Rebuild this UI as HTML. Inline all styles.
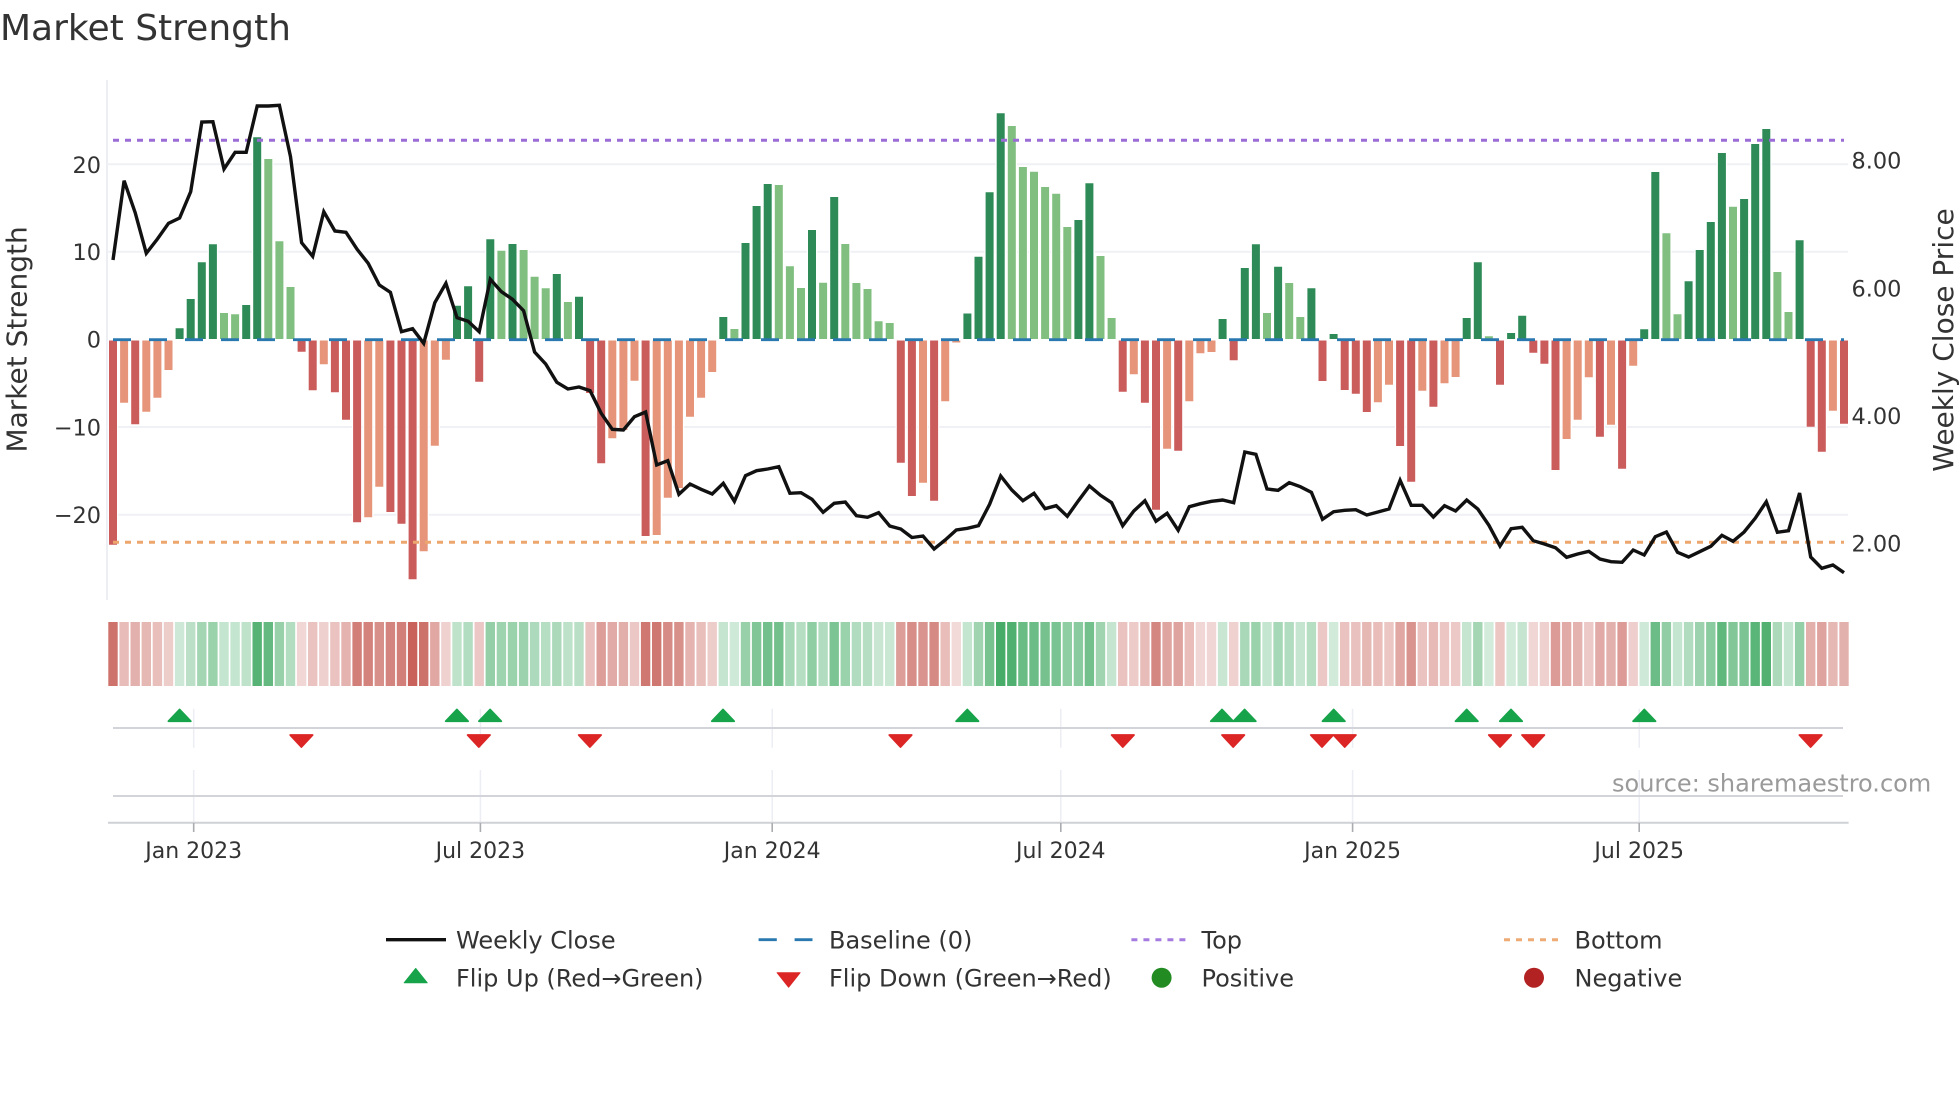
<!DOCTYPE html>
<html lang="en">
<head>
<meta charset="utf-8">
<title>Market Strength</title>
<style>
html,body{margin:0;padding:0;background:#fff;width:1960px;height:1102px;overflow:hidden}
svg{display:block;position:absolute;left:0;top:0}
text{font-family:"DejaVu Sans","Liberation Sans",sans-serif;fill:#333}
.yt{font-size:22.4px;text-anchor:end}
.yr{font-size:22.4px}
.xt{font-size:22px;text-anchor:middle}
.lg{font-size:24px}
</style>
</head>
<body>
<svg width="1960" height="1102" viewBox="0 0 1960 1102" xmlns="http://www.w3.org/2000/svg">
<defs>
<path id="dg" d="M179.6 339V328.3M190.7 339V299M201.8 339V262.3M212.9 339V244.3M246.2 339V305M257.2 339V137.3M457 339V305.7M468.1 339V286.3M490.3 339V239.3M512.5 339V244M556.8 339V274M579 339V296.7M723.3 339V317M745.5 339V243M756.6 339V206M767.7 339V184M812 339V230M834.2 339V197M967.4 339V313.5M978.5 339V256.7M989.6 339V192.3M1000.7 339V113.3M1078.4 339V220M1089.4 339V183.3M1222.6 339V319M1244.8 339V268M1255.9 339V244.3M1278.1 339V266.7M1311.4 339V288.3M1333.6 339V334M1466.7 339V318M1477.8 339V262.3M1511.1 339V333M1522.2 339V315.7M1644.2 339V329.3M1655.3 339V172M1688.6 339V281.3M1699.7 339V250M1710.8 339V222M1721.9 339V153M1744.1 339V199M1755.2 339V144M1766.3 339V129M1799.6 339V240.3"/>
<path id="lg" d="M224 339V313M235.1 339V314.3M268.3 339V159M279.4 339V241.3M290.5 339V287M501.4 339V250.7M523.6 339V250M534.6 339V276.7M545.7 339V288.3M567.9 339V302M734.4 339V329M778.8 339V185M789.9 339V266.3M801 339V288M823.1 339V282.7M845.3 339V244M856.4 339V283M867.5 339V289M878.6 339V321.3M889.7 339V323M1011.8 339V126M1022.9 339V167M1034 339V171.7M1045.1 339V187M1056.2 339V193.7M1067.3 339V227M1100.5 339V256M1111.6 339V318M1267 339V313M1289.2 339V283M1300.3 339V317M1488.9 339V336.3M1666.4 339V233.3M1677.5 339V314.3M1733 339V206.7M1777.4 339V272M1788.5 339V312"/>
<path id="dr" d="M113 340.5V544.7M135.2 340.5V424.3M301.6 340.5V351.7M312.7 340.5V390.3M334.9 340.5V392.3M346 340.5V419.7M357.1 340.5V522.3M390.4 340.5V512M401.5 340.5V523.7M412.6 340.5V579.3M479.2 340.5V381.7M590.1 340.5V393M601.2 340.5V463.3M645.6 340.5V536M900.8 340.5V462.7M911.9 340.5V496M934.1 340.5V500.7M1122.7 340.5V391.7M1144.9 340.5V402.7M1156 340.5V509.7M1178.2 340.5V450.7M1233.7 340.5V360.3M1322.5 340.5V381M1344.7 340.5V390M1355.8 340.5V393.7M1366.8 340.5V412M1400.1 340.5V446M1411.2 340.5V481.7M1433.4 340.5V406.7M1500 340.5V384.7M1533.3 340.5V352.7M1544.4 340.5V363.7M1555.5 340.5V470M1599.9 340.5V436.7M1622.1 340.5V468.7M1810.7 340.5V426.7M1821.8 340.5V451.7M1844 340.5V423.7"/>
<path id="sa" d="M124.1 340.5V402.7M146.3 340.5V411.7M157.4 340.5V397.7M168.5 340.5V370M323.8 340.5V364.3M368.2 340.5V517.3M379.3 340.5V486.7M423.7 340.5V551.3M434.8 340.5V445.7M445.9 340.5V359.7M612.3 340.5V438.3M623.4 340.5V430M634.5 340.5V380.7M656.7 340.5V535M667.8 340.5V497.7M678.9 340.5V488M690 340.5V416.7M701.1 340.5V397.7M712.2 340.5V372M923 340.5V482.7M945.2 340.5V401.3M956.3 340.5V342.5M1133.8 340.5V374.3M1167.1 340.5V448.7M1189.3 340.5V401.3M1200.4 340.5V353.3M1211.5 340.5V352M1377.9 340.5V402.3M1389 340.5V384.7M1422.3 340.5V390.7M1444.5 340.5V383.3M1455.6 340.5V377M1566.6 340.5V439M1577.7 340.5V419.7M1588.8 340.5V377.3M1611 340.5V424.7M1633.2 340.5V365.7M1832.9 340.5V410.7"/>
</defs>

<text x="0" y="40" style="font-size:36px">Market Strength</text>

<!-- grid -->
<g stroke="#f0f1f5" stroke-width="2" fill="none">
<path d="M107 80V600" stroke="#eceef4"/>
<path d="M107 164.3H1848M107 251.7H1848M107 427H1848M107 514.7H1848"/>
</g>

<!-- heat strip -->
<g stroke-width="9.4" fill="none" stroke="#c2524a">
<path d="M113 622V686" opacity=".81"/><path d="M124.1 622V686" opacity=".39"/><path d="M135.2 622V686" opacity=".45"/><path d="M146.3 622V686" opacity=".41"/><path d="M157.4 622V686" opacity=".37"/><path d="M168.5 622V686" opacity=".29"/>
<path d="M301.6 622V686" opacity=".24"/><path d="M312.7 622V686" opacity=".35"/><path d="M323.8 622V686" opacity=".27"/><path d="M334.9 622V686" opacity=".35"/><path d="M346 622V686" opacity=".44"/><path d="M357.1 622V686" opacity=".74"/><path d="M368.2 622V686" opacity=".72"/><path d="M379.3 622V686" opacity=".64"/><path d="M390.4 622V686" opacity=".71"/><path d="M401.5 622V686" opacity=".74"/><path d="M412.6 622V686" opacity=".91"/><path d="M423.7 622V686" opacity=".82"/><path d="M434.8 622V686" opacity=".51"/><path d="M445.9 622V686" opacity=".26"/>
<path d="M479.2 622V686" opacity=".32"/>
<path d="M590.1 622V686" opacity=".36"/><path d="M601.2 622V686" opacity=".56"/><path d="M612.3 622V686" opacity=".49"/><path d="M623.4 622V686" opacity=".47"/><path d="M634.5 622V686" opacity=".32"/><path d="M645.6 622V686" opacity=".78"/><path d="M656.7 622V686" opacity=".78"/><path d="M667.8 622V686" opacity=".67"/><path d="M678.9 622V686" opacity=".64"/><path d="M690 622V686" opacity=".43"/><path d="M701.1 622V686" opacity=".37"/><path d="M712.2 622V686" opacity=".29"/>
<path d="M900.8 622V686" opacity=".56"/><path d="M911.9 622V686" opacity=".66"/><path d="M923 622V686" opacity=".62"/><path d="M934.1 622V686" opacity=".68"/><path d="M945.2 622V686" opacity=".38"/><path d="M956.3 622V686" opacity=".21"/>
<path d="M1122.7 622V686" opacity=".35"/><path d="M1133.8 622V686" opacity=".3"/><path d="M1144.9 622V686" opacity=".39"/><path d="M1156 622V686" opacity=".7"/><path d="M1167.1 622V686" opacity=".52"/><path d="M1178.2 622V686" opacity=".53"/><path d="M1189.3 622V686" opacity=".38"/><path d="M1200.4 622V686" opacity=".24"/><path d="M1211.5 622V686" opacity=".24"/>
<path d="M1233.7 622V686" opacity=".26"/><path d="M1322.5 622V686" opacity=".32"/>
<path d="M1344.7 622V686" opacity=".35"/><path d="M1355.8 622V686" opacity=".36"/><path d="M1366.8 622V686" opacity=".41"/><path d="M1377.9 622V686" opacity=".38"/><path d="M1389 622V686" opacity=".33"/><path d="M1400.1 622V686" opacity=".51"/><path d="M1411.2 622V686" opacity=".62"/><path d="M1422.3 622V686" opacity=".35"/><path d="M1433.4 622V686" opacity=".4"/><path d="M1444.5 622V686" opacity=".33"/><path d="M1455.6 622V686" opacity=".31"/>
<path d="M1500 622V686" opacity=".33"/><path d="M1533.3 622V686" opacity=".24"/><path d="M1544.4 622V686" opacity=".27"/><path d="M1555.5 622V686" opacity=".58"/><path d="M1566.6 622V686" opacity=".49"/><path d="M1577.7 622V686" opacity=".44"/><path d="M1588.8 622V686" opacity=".31"/><path d="M1599.9 622V686" opacity=".49"/><path d="M1611 622V686" opacity=".45"/><path d="M1622.1 622V686" opacity=".58"/><path d="M1633.2 622V686" opacity=".28"/>
<path d="M1810.7 622V686" opacity=".46"/><path d="M1821.8 622V686" opacity=".53"/><path d="M1832.9 622V686" opacity=".41"/><path d="M1844 622V686" opacity=".45"/>
</g>
<g stroke-width="9.4" fill="none" stroke="#2ca052">
<path d="M179.6 622V686" opacity=".24"/><path d="M190.7 622V686" opacity=".32"/><path d="M201.8 622V686" opacity=".43"/><path d="M212.9 622V686" opacity=".48"/><path d="M224 622V686" opacity=".28"/><path d="M235.1 622V686" opacity=".28"/><path d="M246.2 622V686" opacity=".3"/><path d="M257.2 622V686" opacity=".8"/><path d="M268.3 622V686" opacity=".74"/><path d="M279.4 622V686" opacity=".49"/><path d="M290.5 622V686" opacity=".36"/>
<path d="M457 622V686" opacity=".3"/><path d="M468.1 622V686" opacity=".36"/><path d="M490.3 622V686" opacity=".5"/><path d="M501.4 622V686" opacity=".46"/><path d="M512.5 622V686" opacity=".48"/><path d="M523.6 622V686" opacity=".47"/><path d="M534.6 622V686" opacity=".39"/><path d="M545.7 622V686" opacity=".35"/><path d="M556.8 622V686" opacity=".4"/><path d="M567.9 622V686" opacity=".31"/><path d="M579 622V686" opacity=".33"/>
<path d="M723.3 622V686" opacity=".27"/><path d="M734.4 622V686" opacity=".23"/><path d="M745.5 622V686" opacity=".49"/><path d="M756.6 622V686" opacity=".6"/><path d="M767.7 622V686" opacity=".66"/><path d="M778.8 622V686" opacity=".66"/><path d="M789.9 622V686" opacity=".42"/><path d="M801 622V686" opacity=".35"/><path d="M812 622V686" opacity=".53"/><path d="M823.1 622V686" opacity=".37"/><path d="M834.2 622V686" opacity=".62"/><path d="M845.3 622V686" opacity=".48"/><path d="M856.4 622V686" opacity=".37"/><path d="M867.5 622V686" opacity=".35"/><path d="M878.6 622V686" opacity=".26"/><path d="M889.7 622V686" opacity=".25"/>
<path d="M967.4 622V686" opacity=".28"/><path d="M978.5 622V686" opacity=".45"/><path d="M989.6 622V686" opacity=".64"/><path d="M1000.7 622V686" opacity=".87"/><path d="M1011.8 622V686" opacity=".83"/><path d="M1022.9 622V686" opacity=".71"/><path d="M1034 622V686" opacity=".7"/><path d="M1045.1 622V686" opacity=".65"/><path d="M1056.2 622V686" opacity=".63"/><path d="M1067.3 622V686" opacity=".53"/><path d="M1078.4 622V686" opacity=".56"/><path d="M1089.4 622V686" opacity=".66"/><path d="M1100.5 622V686" opacity=".45"/><path d="M1111.6 622V686" opacity=".27"/>
<path d="M1222.6 622V686" opacity=".26"/><path d="M1244.8 622V686" opacity=".41"/><path d="M1255.9 622V686" opacity=".48"/><path d="M1267 622V686" opacity=".28"/><path d="M1278.1 622V686" opacity=".42"/><path d="M1289.2 622V686" opacity=".37"/><path d="M1300.3 622V686" opacity=".27"/><path d="M1311.4 622V686" opacity=".35"/><path d="M1333.6 622V686" opacity=".22"/>
<path d="M1466.7 622V686" opacity=".27"/><path d="M1477.8 622V686" opacity=".43"/><path d="M1488.9 622V686" opacity=".21"/><path d="M1511.1 622V686" opacity=".22"/><path d="M1522.2 622V686" opacity=".27"/>
<path d="M1644.2 622V686" opacity=".23"/><path d="M1655.3 622V686" opacity=".7"/><path d="M1666.4 622V686" opacity=".52"/><path d="M1677.5 622V686" opacity=".28"/><path d="M1688.6 622V686" opacity=".37"/><path d="M1699.7 622V686" opacity=".47"/><path d="M1710.8 622V686" opacity=".55"/><path d="M1721.9 622V686" opacity=".75"/><path d="M1733 622V686" opacity=".59"/><path d="M1744.1 622V686" opacity=".62"/><path d="M1755.2 622V686" opacity=".78"/><path d="M1766.3 622V686" opacity=".82"/><path d="M1777.4 622V686" opacity=".4"/><path d="M1788.5 622V686" opacity=".28"/><path d="M1799.6 622V686" opacity=".5"/>
</g>

<!-- bars -->
<g fill="none" stroke="#fff" stroke-width="10.5">
<use href="#dg"/><use href="#lg"/><use href="#dr"/><use href="#sa"/>
</g>
<g fill="none" stroke-width="8">
<use href="#dg" stroke="#2e8b57"/>
<use href="#lg" stroke="#81bf81"/>
<use href="#dr" stroke="#cb5c5c"/>
<use href="#sa" stroke="#e6957a"/>
</g>

<!-- reference lines -->
<path d="M113 339.7H1844" stroke="#2a78b0" stroke-width="2.8" stroke-dasharray="18 18" fill="none"/>
<path d="M113 140.3H1844" stroke="#9b6cd6" stroke-width="3" stroke-dasharray="6 6" fill="none"/>
<path d="M113 542.3H1844" stroke="#eca66e" stroke-width="3" stroke-dasharray="6 6" fill="none"/>

<!-- weekly close -->
<polyline fill="none" stroke="#111" stroke-width="3.4" stroke-linejoin="miter" points="113,260 124.1,180.7 135.2,212.7 146.3,253.3 157.4,239 168.5,223.3 179.6,218 190.7,191.7 201.8,122 212.9,121.7 224,169 235.1,152.3 246.2,152.3 257.2,106 268.3,106 279.4,105.3 290.5,156.7 301.6,242.7 312.7,256.3 323.8,211.7 334.9,231 346,232.3 357.1,249.3 368.2,263.3 379.3,285 390.4,292.3 401.5,331.7 412.6,328.7 423.7,343.3 434.8,302.7 445.9,283.3 457,317.7 468.1,321.3 479.2,331.7 490.3,279.3 501.4,291.7 512.5,299.3 523.6,310.7 534.6,352 545.7,364 556.8,382.3 567.9,389 579,387 590.1,390.7 601.2,413.3 612.3,429.3 623.4,430 634.5,416.7 645.6,412 656.7,465 667.8,460.7 678.9,494.3 690,484 701.1,489.3 712.2,494 723.3,483.3 734.4,501.3 745.5,475.7 756.6,470.7 767.7,469 778.8,466.7 789.9,493.3 801,492.7 812,499.3 823.1,512.3 834.2,503.3 845.3,502 856.4,515.7 867.5,517.3 878.6,512.7 889.7,526 900.8,529 911.9,537.5 923,536 934.1,549 945.2,540 956.3,530 967.4,528.3 978.5,525.7 989.6,504.3 1000.7,476 1011.8,490 1022.9,500.7 1034,493.3 1045.1,508.7 1056.2,505.7 1067.3,516.3 1078.4,500.7 1089.4,486 1100.5,495.3 1111.6,502.7 1122.7,525.7 1133.8,511 1144.9,500.7 1156,521.3 1167.1,513.3 1178.2,530.3 1189.3,506.7 1200.4,503.7 1211.5,501.3 1222.6,500 1233.7,502.7 1244.8,452 1255.9,454.3 1267,489 1278.1,490.3 1289.2,482.7 1300.3,486.7 1311.4,492.3 1322.5,519.3 1333.6,511.7 1344.7,510.3 1355.8,509.7 1366.8,515 1377.9,512 1389,509 1400.1,480.3 1411.2,505.3 1422.3,505.3 1433.4,517 1444.5,505.7 1455.6,511 1466.7,500 1477.8,509 1488.9,525.3 1500,546 1511.1,528.7 1522.2,527.3 1533.3,540.7 1544.4,544 1555.5,547.7 1566.6,557.3 1577.7,554 1588.8,551.3 1599.9,559 1611,561.7 1622.1,562.3 1633.2,550 1644.2,555 1655.3,536.7 1666.4,532 1677.5,552.3 1688.6,557 1699.7,551.7 1710.8,546.3 1721.9,535.3 1733,541.3 1744.1,532 1755.2,518.3 1766.3,501.7 1777.4,532.3 1788.5,530.7 1799.6,493 1810.7,557 1821.8,568.3 1832.9,565 1844,572.7"/>

<!-- y ticks -->
<g>
<text class="yt" x="101" y="172.8">20</text>
<text class="yt" x="101" y="260.2">10</text>
<text class="yt" x="101" y="347.5">0</text>
<text class="yt" x="101" y="435.5">−10</text>
<text class="yt" x="101" y="523">−20</text>
<text class="yr" x="1851.5" y="168.3">8.00</text>
<text class="yr" x="1851.5" y="296.7">6.00</text>
<text class="yr" x="1851.5" y="424">4.00</text>
<text class="yr" x="1851.5" y="551.3">2.00</text>
</g>
<text transform="translate(26.7 339.4) rotate(-90)" text-anchor="middle" style="font-size:28px">Market Strength</text>
<text transform="translate(1953 340) rotate(-90)" text-anchor="middle" style="font-size:28px">Weekly Close Price</text>

<!-- lower vertical grid -->
<g stroke="#eceef4" stroke-width="1.5" fill="none">
<path d="M193.7 708.7V747.7M193.7 770V822M480.4 708.7V747.7M480.4 770V822M772.2 708.7V747.7M772.2 770V822M1060.8 708.7V747.7M1060.8 770V822M1352.6 708.7V747.7M1352.6 770V822M1639.2 708.7V747.7M1639.2 770V822"/>
</g>
<g stroke="#d2d4da" stroke-width="2" fill="none">
<path d="M113 728H1843M113 796H1843"/>
<path d="M108 822.7H1848.6" stroke="#cfd1d6"/>
</g>
<path d="M193.7 823V832M480.4 823V832M772.2 823V832M1060.8 823V832M1352.6 823V832M1639.2 823V832" stroke="#aaacb0" stroke-width="1.6" fill="none"/>

<!-- flip markers -->
<g fill="#16a34a" stroke="#16a34a" stroke-width="1.8" stroke-linejoin="round">
<path d="M179.6 709.5l11.2 11.7h-22.4z"/>
<path d="M456.9 709.5l11.2 11.7h-22.4z"/>
<path d="M490.1 709.5l11.2 11.7h-22.4z"/>
<path d="M723 709.5l11.2 11.7h-22.4z"/>
<path d="M967.3 709.5l11.2 11.7h-22.4z"/>
<path d="M1222 709.5l11.2 11.7h-22.4z"/>
<path d="M1244.6 709.5l11.2 11.7h-22.4z"/>
<path d="M1333.7 709.5l11.2 11.7h-22.4z"/>
<path d="M1466.7 709.5l11.2 11.7h-22.4z"/>
<path d="M1511 709.5l11.2 11.7h-22.4z"/>
<path d="M1644.3 709.5l11.2 11.7h-22.4z"/>
</g>
<g fill="#dc2626" stroke="#dc2626" stroke-width="1.8" stroke-linejoin="round">
<path d="M301.4 747l-11.2-12h22.4z"/>
<path d="M478.8 747l-11.2-12h22.4z"/>
<path d="M589.9 747l-11.2-12h22.4z"/>
<path d="M900.5 747l-11.2-12h22.4z"/>
<path d="M1122.8 747l-11.2-12h22.4z"/>
<path d="M1233.2 747l-11.2-12h22.4z"/>
<path d="M1322 747l-11.2-12h22.4z"/>
<path d="M1344.7 747l-11.2-12h22.4z"/>
<path d="M1500 747l-11.2-12h22.4z"/>
<path d="M1533.2 747l-11.2-12h22.4z"/>
<path d="M1810.6 747l-11.2-12h22.4z"/>
</g>

<!-- x ticks -->
<text class="xt" x="193.7" y="858">Jan 2023</text>
<text class="xt" x="480.4" y="858">Jul 2023</text>
<text class="xt" x="772.2" y="858">Jan 2024</text>
<text class="xt" x="1060.8" y="858">Jul 2024</text>
<text class="xt" x="1352.6" y="858">Jan 2025</text>
<text class="xt" x="1639.2" y="858">Jul 2025</text>

<text x="1612" y="791.7" style="font-size:24px;fill:#9a9a9a">source: sharemaestro.com</text>

<!-- legend -->
<path d="M386 939.7H446" stroke="#111" stroke-width="3.4" fill="none"/>
<path d="M758.6 939.7H776.8M794.6 939.7H812.5" stroke="#2a78b0" stroke-width="2.8" fill="none"/>
<path d="M1131.4 939.7H1186" stroke="#a67be0" stroke-width="3" stroke-dasharray="6 6" fill="none"/>
<path d="M1504 939.7H1558.5" stroke="#eeab76" stroke-width="3" stroke-dasharray="6 6" fill="none"/>
<path d="M415.7 968.5l11.5 14.3h-23z" fill="#16a34a" stroke="#16a34a" stroke-linejoin="round"/>
<path d="M788.6 987.2l-11.5-14.5h23z" fill="#dc2626" stroke="#dc2626" stroke-linejoin="round"/>
<circle cx="1161.6" cy="977.7" r="10" fill="#228b22"/>
<circle cx="1534" cy="977.7" r="10" fill="#b22222"/>
<text class="lg" x="456" y="948.3">Weekly Close</text>
<text class="lg" x="829" y="948.3">Baseline (0)</text>
<text class="lg" x="1201.5" y="948.3">Top</text>
<text class="lg" x="1574.5" y="948.3">Bottom</text>
<text class="lg" x="456" y="986.5">Flip Up (Red→Green)</text>
<text class="lg" x="829" y="986.5">Flip Down (Green→Red)</text>
<text class="lg" x="1201.5" y="986.5">Positive</text>
<text class="lg" x="1574.5" y="986.5">Negative</text>
</svg>
</body>
</html>
